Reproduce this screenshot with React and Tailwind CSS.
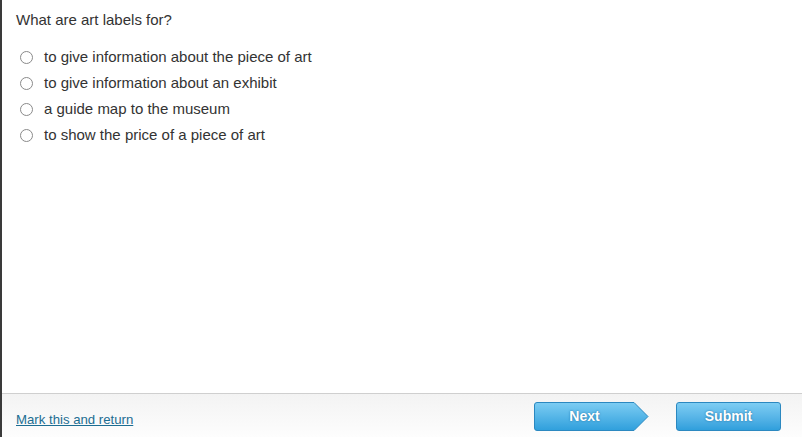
import { useState } from 'react';

const options = [
  'to give information about the piece of art',
  'to give information about an exhibit',
  'a guide map to the museum',
  'to show the price of a piece of art',
];

function NextButton() {
  return (
    <button className="relative mt-[2px] h-[29px] w-[115px] text-[14px] font-bold text-white [text-shadow:0_0_2px_#1f6e9c]">
      <svg className="absolute inset-0" width="115" height="29" viewBox="0 0 115 29">
        <defs>
          <linearGradient id="nextGrad" x1="0" y1="0" x2="0" y2="1">
            <stop offset="0" stopColor="#7dcdf3" />
            <stop offset="1" stopColor="#2f9fdc" />
          </linearGradient>
        </defs>
        <path
          d="M3 0.5 H100 L114 14.5 L100 28.5 H3 Q0.5 28.5 0.5 26 V3 Q0.5 0.5 3 0.5 Z"
          fill="url(#nextGrad)"
          stroke="#2b88c0"
        />
      </svg>
      <span className="relative pr-[14px]">Next</span>
    </button>
  );
}

export default function App() {
  const [choice, setChoice] = useState(null);

  return (
    <div className="flex h-[437px] w-[802px] flex-col border-l-2 border-[#3a3a3a] bg-white font-['Liberation_Sans',Arial,sans-serif] text-[#333]">
      <div className="flex-1 px-[14px] pt-[11px]">
        <p className="text-[15px] leading-[18px]">What are art labels for?</p>
        <ul className="mt-[19px] flex flex-col gap-[8px]">
          {options.map((option, i) => (
            <li key={option} className="flex h-[18px] items-center">
              <label className="flex cursor-pointer items-center text-[15px]">
                <input
                  type="radio"
                  name="answer"
                  checked={choice === i}
                  onChange={() => setChoice(i)}
                  className="ml-[4px] h-[13px] w-[13px] appearance-none rounded-full border border-[#8a8a8a] bg-white checked:border-[4px] checked:border-[#2a8ac4]"
                />
                <span className="ml-[11px]">{option}</span>
              </label>
            </li>
          ))}
        </ul>
      </div>
      <footer className="flex h-[44px] items-center border-t border-[#cfcfcf] bg-gradient-to-b from-[#f3f3f3] to-[#fdfdfd] pl-[14px] pr-[21px]">
        <a href="#" className="mt-[8px] text-[13.2px] text-[#1c6d92] underline">
          Mark this and return
        </a>
        <div className="ml-auto flex items-center gap-[27px]">
          <NextButton />
          <button className="mt-[1px] h-[29px] w-[105px] rounded-[3px] border border-[#2b88c0] bg-gradient-to-b from-[#7dcdf3] to-[#2f9fdc] text-[14px] font-bold text-white [text-shadow:0_0_2px_#1f6e9c]">
            Submit
          </button>
        </div>
      </footer>
    </div>
  );
}
